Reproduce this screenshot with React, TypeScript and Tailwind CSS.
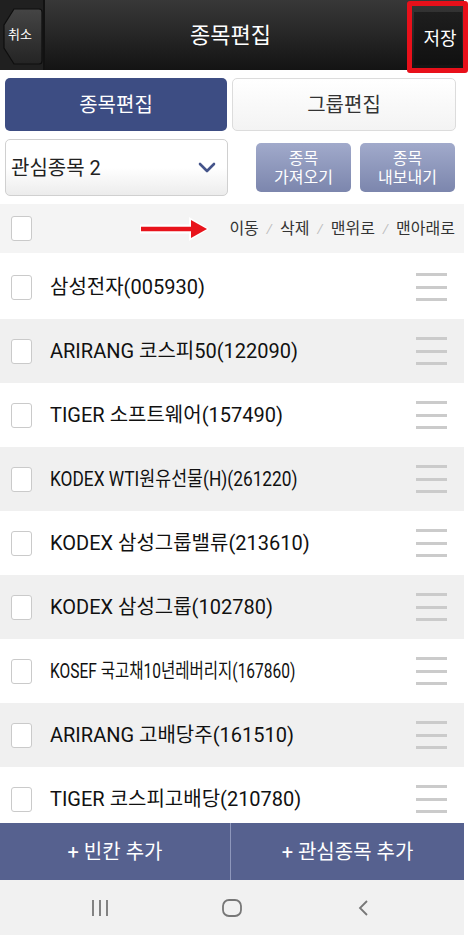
import React from "react";

const items: { name: string; squeeze?: string }[] = [
  { name: "삼성전자(005930)" },
  { name: "ARIRANG 코스피50(122090)" },
  { name: "TIGER 소프트웨어(157490)" },
  { name: "KODEX WTI원유선물(H)(261220)", squeeze: "a" },
  { name: "KODEX 삼성그룹밸류(213610)" },
  { name: "KODEX 삼성그룹(102780)" },
  { name: "KOSEF 국고채10년레버리지(167860)", squeeze: "b" },
  { name: "ARIRANG 고배당주(161510)" },
  { name: "TIGER 코스피고배당(210780)" },
];

function CheckBox() {
  return <div className="w-[21px] h-[25px] shrink-0 rounded-[3px] border border-[#cacaca] bg-white" />;
}

function Handle() {
  return (
    <div className="flex flex-col gap-[9.5px] w-[31px]">
      <div className="h-[3px] bg-[#cbcbcb]" />
      <div className="h-[3px] bg-[#cbcbcb]" />
      <div className="h-[3px] bg-[#cbcbcb]" />
    </div>
  );
}

export default function App() {
  return (
    <div
      className="relative w-[473px] h-[935px] overflow-hidden bg-white"
      style={{ fontFamily: 'Roboto, "Noto Sans CJK KR", sans-serif' }}
    >
      <div className="w-[464px]">
        {/* Header */}
        <div className="h-[70px] flex bg-gradient-to-b from-[#383838] via-[#262626] to-[#141414]">
          <div className="relative w-[45px] h-[70px] bg-[#202020] border-r-2 border-[#121212]">
            <svg width="44" height="70" viewBox="0 0 44 70" className="absolute left-0 top-0">
              <defs>
                <linearGradient id="bk" x1="0" y1="0" x2="0" y2="1">
                  <stop offset="0" stopColor="#454545" />
                  <stop offset="1" stopColor="#242424" />
                </linearGradient>
              </defs>
              <path d="M14 9 L39 9 Q42 9 42 12 L42 61 Q42 64 39 64 L14 64 L4 48 L4 25 Z" fill="url(#bk)" stroke="#0e0e0e" strokeWidth="1.2" />
            </svg>
            <span className="absolute left-[8px] top-[27px] text-white text-[13px] leading-[16px]">취소</span>
          </div>
          <div className="flex-1 flex items-center justify-center pl-[8px] text-white text-[22px]">종목편집</div>
          <div className="w-[56px] flex items-start pl-[6px] pt-[12px]">
            <div className="w-[48px] h-[53px] bg-gradient-to-b from-[#1e1e1e] to-[#111] flex items-center justify-center pl-[4px] text-white text-[18px]">
              저장
            </div>
          </div>
        </div>

        {/* Tabs */}
        <div className="flex gap-[5px] pl-[5px] pr-[8px] mt-[8px] h-[53px]">
          <div className="flex-1 rounded-[5px] bg-[#3d4d83] flex items-center justify-center text-white text-[20px]">종목편집</div>
          <div className="flex-1 rounded-[5px] border border-[#dcdcdc] bg-gradient-to-b from-white to-[#f3f3f3] flex items-center justify-center text-[#333] text-[20px]">그룹편집</div>
        </div>

        {/* Dropdown + buttons */}
        <div className="flex items-center pl-[5px] mt-[8px] h-[57px]">
          <div className="w-[223px] h-[57px] rounded-[5px] border border-[#d0d0d0] bg-gradient-to-b from-white via-white to-[#ececec] flex items-center justify-between pl-[5px] pr-[11px]">
            <span className="text-[20px] text-[#222]">관심종목 2</span>
            <svg width="18" height="12" viewBox="0 0 18 12">
              <path d="M2 2 L9 9 L16 2" fill="none" stroke="#44548a" strokeWidth="2.6" strokeLinecap="round" strokeLinejoin="round" />
            </svg>
          </div>
          <div className="ml-[28px] flex gap-[9px]">
            <div className="w-[95px] h-[49px] rounded-[5px] bg-gradient-to-b from-[#a1aacb] to-[#7c86ad] flex flex-col items-center justify-center text-white text-[16px] leading-[19px]">
              <span>종목</span>
              <span>가져오기</span>
            </div>
            <div className="w-[95px] h-[49px] rounded-[5px] bg-gradient-to-b from-[#a1aacb] to-[#7c86ad] flex flex-col items-center justify-center text-white text-[16px] leading-[19px]">
              <span>종목</span>
              <span>내보내기</span>
            </div>
          </div>
        </div>

        {/* Toolbar */}
        <div className="mt-[8px] h-[49px] bg-[#f4f4f4] flex items-center pl-[11px] pr-[9px]">
          <CheckBox />
          <div className="flex-1 flex justify-end pr-[19px]">
            <svg width="71" height="26" viewBox="0 0 71 26">
              <path d="M1 13 L54 13" stroke="#fff" strokeWidth="9" />
              <path d="M50 1 L70 13 L50 25 Z" fill="#fff" />
              <path d="M2 13 L55 13" stroke="#e8131b" strokeWidth="4.5" />
              <path d="M52 4 L68 13 L52 22 Z" fill="#e8131b" />
            </svg>
          </div>
          <div className="flex items-center text-[16px] text-[#333]">
            <span>이동</span>
            <span className="mx-[8px] text-[#bdbdbd] text-[13px] italic">/</span>
            <span>삭제</span>
            <span className="mx-[8px] text-[#bdbdbd] text-[13px] italic">/</span>
            <span>맨위로</span>
            <span className="mx-[8px] text-[#bdbdbd] text-[13px] italic">/</span>
            <span>맨아래로</span>
          </div>
        </div>

        {/* List */}
        <div className="mt-[2px] h-[568px] overflow-hidden">
          {items.map((it, i) => (
            <div
              key={i}
              className={`h-[64px] flex items-center pl-[11px] pr-[17px] ${i % 2 === 1 ? "bg-[#f0f0f0]" : "bg-white"}`}
            >
              <CheckBox />
              <div className="flex-1 ml-[18px] text-[20px] text-[#111] whitespace-nowrap">
                {it.squeeze === "a" ? (
                  <span className="inline-block origin-left scale-x-[0.865]">{it.name}</span>
                ) : it.squeeze === "b" ? (
                  <span className="inline-block origin-left scale-x-[0.776]">{it.name}</span>
                ) : (
                  <span>{it.name}</span>
                )}
              </div>
              <Handle />
            </div>
          ))}
        </div>

        {/* Bottom bar */}
        <div className="h-[57px] bg-[#56618f] flex items-center text-white text-[20px]">
          <div className="w-[230px] h-full flex items-center justify-center">+ 빈칸 추가</div>
          <div className="w-px h-full bg-[#8e97bb]" />
          <div className="flex-1 h-full flex items-center justify-center">+ 관심종목 추가</div>
        </div>
      </div>

      {/* Nav bar */}
      <div className="h-[55px] w-[464px] bg-[#f1f1f1] flex items-center justify-between px-[90px]">
        <svg width="20" height="20" viewBox="0 0 20 20">
          <path d="M3 2 V18 M10 2 V18 M17 2 V18" stroke="#777" strokeWidth="1.8" />
        </svg>
        <svg width="22" height="20" viewBox="0 0 22 20">
          <rect x="2" y="2" width="18" height="16" rx="6" fill="none" stroke="#777" strokeWidth="1.8" />
        </svg>
        <svg width="20" height="20" viewBox="0 0 20 20">
          <path d="M13 3 L6 10 L13 17" fill="none" stroke="#777" strokeWidth="1.8" />
        </svg>
      </div>

      {/* Red highlight annotation */}
      <div className="absolute left-[407px] top-[1px] w-[61px] h-[72px] border-[5px] border-[#e8101a] rounded-[3px]" />
    </div>
  );
}
